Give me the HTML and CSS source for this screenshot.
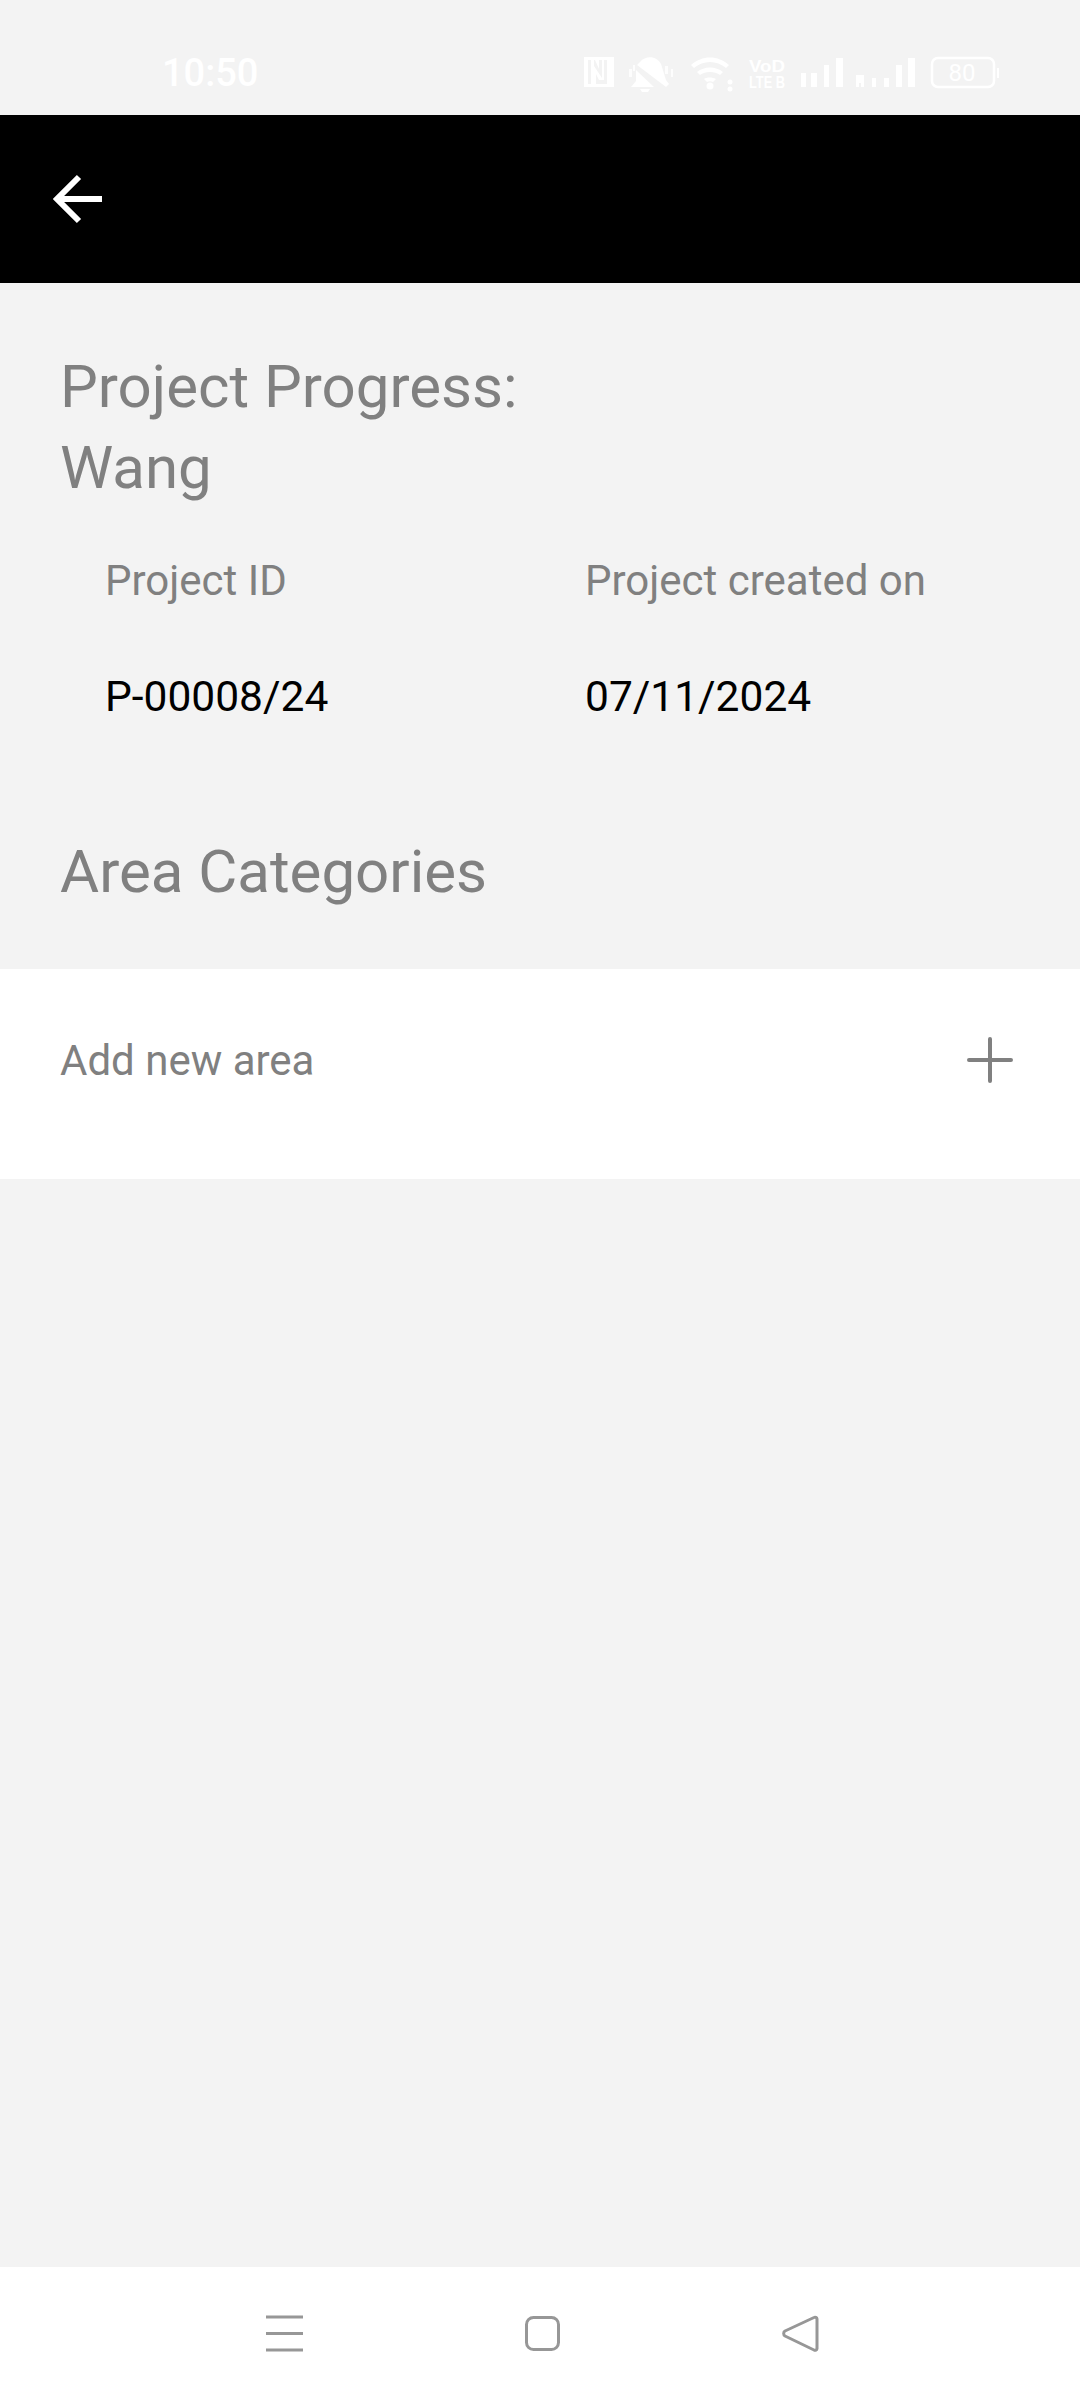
FILE: index.html
```html
<!DOCTYPE html>
<html lang="en">
<head>
<meta charset="utf-8">
<title>Project Progress</title>
<link rel="stylesheet" href="styles.css">
</head>
<body>
<div class="screen">
  <header class="status">
    <span class="time">10:50</span>
    <svg class="status-icons" width="416" height="36" viewBox="0 0 416 36" fill="#fff">
      <path fill-rule="evenodd" d="M0 1h30v30H0zM4 4v24h3V4zM10 4v6l8 12V4h-3v9l-4-9zM12 14v14h11V4h-3v20h-5l-3-6z"/>
      <path d="M56 6c6-7 17-6 21 2l5 16 3 4-3 3L53 9l3-3zM52 14l18 17H47l5-6zM56 33h10l-2 3h-6z"/>
      <path d="M45 13h3v8h-3zM49 9h2v6h-2zM81 10h3v8h-3zM87 13h2v8h-2z" opacity=".8"/>
      <path d="M107 9c11-10 27-10 38 0l-3 3c-9-8-23-8-32 0zM113 16c7-6 19-6 26 0l-3 3c-5-4-15-4-20 0zM120 23c3-2 8-2 12 0l-3 3c-2-1-4-1-6 0z"/>
      <circle cx="126" cy="30" r="3.5"/>
      <circle cx="146" cy="26" r="2.5"/><circle cx="146" cy="33" r="2.5"/>
      <text x="165" y="16" class="tiny" textLength="36" lengthAdjust="spacingAndGlyphs">VoD</text>
      <text x="165" y="32" class="tiny" textLength="36" lengthAdjust="spacingAndGlyphs">LTE B</text>
      <path d="M217 17h5v14h-5zM227 17h6v14h-6zM240 9h5v22h-5zM252 2h7v29h-7z"/>
      <path d="M272 19h8v12h-3v-4h-2v4h-3zM288 22h4v9h-4zM300 22h5v9h-5zM312 9h6v22h-6zM324 2h7v29h-7z"/>
      <rect x="348" y="2" width="62" height="29" rx="6" fill="none" stroke="#fff" stroke-width="2.5"/>
      <path d="M413 12h2v10h-2z"/>
      <text x="378" y="25" class="batt" text-anchor="middle">80</text>
    </svg>
  </header>

  <div class="appbar">
    <svg width="56" height="56" viewBox="0 0 56 56" fill="none" stroke="#fff" stroke-width="6">
      <path d="M55 28H11M32 6L10 28l22 22"/>
    </svg>
  </div>

  <main class="content">
    <h1 class="title">Project Progress:<br>Wang</h1>
    <div class="meta">
      <div class="meta-col">
        <div class="label">Project ID</div>
        <div class="value">P-00008/24</div>
      </div>
      <div class="meta-col">
        <div class="label">Project created on</div>
        <div class="value">07/11/2024</div>
      </div>
    </div>
    <h2 class="section">Area Categories</h2>
    <div class="add-row">
      <span class="add-text">Add new area</span>
      <svg width="46" height="46" viewBox="0 0 46 46" stroke="#808080" stroke-width="4" stroke-linecap="round">
        <path d="M23 2v42M2 23h42"/>
      </svg>
    </div>
  </main>

  <footer class="nav">
    <svg width="37" height="37" viewBox="0 0 37 37" stroke="#979797" stroke-width="3"><path d="M0 2h37M0 18.500h37M0 35h37"/></svg>
    <svg width="35" height="35" viewBox="0 0 35 35" fill="none" stroke="#979797" stroke-width="3"><rect x="1.500" y="1.500" width="32" height="32" rx="7"/></svg>
    <svg width="37" height="37" viewBox="0 0 37 37" fill="none" stroke="#979797" stroke-width="3" stroke-linejoin="round"><path d="M35 4a2 2 0 0 0-3-1.500L3 16a3 3 0 0 0 0 5l29 14a2 2 0 0 0 3-1.500z"/></svg>
  </footer>
</div>
</body>
</html>
```

FILE: styles.css
```css
html, body {
  margin: 0;
  padding: 0;
}

body {
  font-family: Roboto, "Liberation Sans", sans-serif;
  background: #f3f3f3;
}

.screen {
  width: 1080px;
  height: 2400px;
  display: flex;
  flex-direction: column;
  background: #f3f3f3;
  overflow: hidden;
}

.status {
  height: 115px;
  flex: none;
  display: flex;
  align-items: flex-start;
  padding: 56px 80px 0 162px;
  box-sizing: border-box;
}

.time {
  color: #fff;
  font-size: 38px;
  font-weight: 500;
  line-height: 34px;
  margin-right: auto;
}

.status-icons {
  flex: none;
}

.tiny {
  font-family: "Liberation Sans", sans-serif;
  font-size: 16px;
  font-weight: 700;
  fill: #fff;
}

.batt {
  font-family: Roboto, sans-serif;
  font-size: 24px;
  fill: #fff;
}

.appbar {
  height: 168px;
  flex: none;
  background: #000;
  display: flex;
  align-items: center;
  padding-left: 47px;
}

.content {
  flex: 1;
}

.title {
  margin: 0;
  padding: 63px 60px 0;
  font-size: 60px;
  line-height: 81px;
  font-weight: 400;
  color: #808080;
}

.meta {
  display: grid;
  grid-template-columns: 480px 1fr;
  padding: 45px 0 0 105px;
}

.label {
  font-size: 42px;
  line-height: 56px;
  color: #808080;
}

.value {
  margin-top: 60px;
  font-size: 42.500px;
  line-height: 56px;
  color: #000;
}

.section {
  margin: 0;
  padding: 106px 60px 0;
  font-size: 60px;
  line-height: 81px;
  font-weight: 400;
  color: #808080;
}

.add-row {
  margin-top: 57px;
  height: 210px;
  background: #fff;
  display: flex;
  align-items: flex-start;
  justify-content: space-between;
  padding: 69px 67px 0 60px;
  box-sizing: border-box;
}

.add-text {
  font-size: 42px;
  line-height: 46px;
  color: #808080;
}

.add-row svg {
  margin-top: -1px;
}

.nav {
  height: 133px;
  flex: none;
  background: #fff;
  display: flex;
  align-items: center;
  gap: 222px;
  padding-left: 266px;
  box-sizing: border-box;
}
```
